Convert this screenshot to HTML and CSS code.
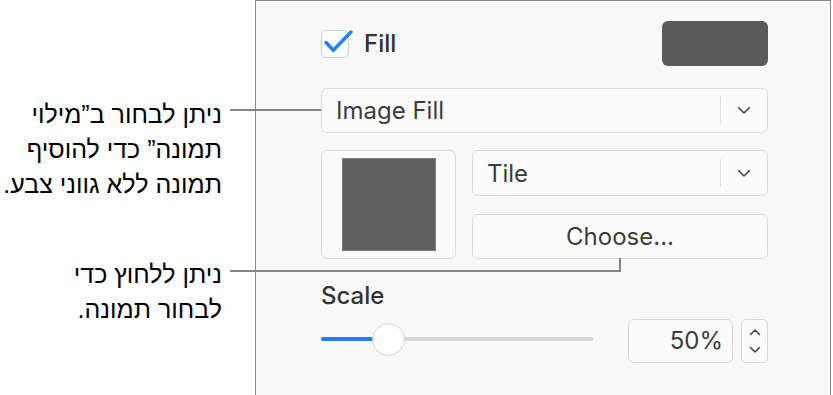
FILE: index.html
```html
<!DOCTYPE html>
<html lang="he">
<head>
  <meta charset="UTF-8">
  <title>Image Fill</title>
  <link rel="stylesheet" href="styles.css">
</head>
<body>
  <div class="page">
    <div class="notes">
      <p class="note">ניתן לבחור ב”מילוי<br>תמונה” כדי להוסיף<br>תמונה ללא גווני צבע.<span class="leader leader-fill"></span></p>
      <p class="note note-choose">ניתן ללחוץ כדי<br>לבחור תמונה.<span class="leader leader-choose"></span></p>
    </div>

    <div class="panel" dir="ltr" lang="en">
      <div class="fill-row">
        <span class="check">
          <svg width="36" height="28" viewBox="0 0 36 28"><path d="M5 13.5 L12.3 21.3 L30 3" /></svg>
        </span>
        <span class="fill-label">Fill</span>
        <span class="swatch"></span>
      </div>

      <div class="popup popup-fill">
        <span class="popup-label">Image Fill</span>
        <span class="popup-arrow"><svg width="14" height="9" viewBox="0 0 14 9"><path d="M1.5 1.5 L7 7 L12.5 1.5" /></svg></span>
      </div>

      <div class="image-row">
        <div class="image-well"><span class="image-thumb"></span></div>
        <div class="image-controls">
          <div class="popup popup-tile">
            <span class="popup-label">Tile</span>
            <span class="popup-arrow"><svg width="14" height="9" viewBox="0 0 14 9"><path d="M1.5 1.5 L7 7 L12.5 1.5" /></svg></span>
          </div>
          <div class="button">Choose...</div>
        </div>
      </div>

      <div class="scale-label">Scale</div>
      <div class="scale-row">
        <div class="slider">
          <span class="slider-fill"></span>
          <span class="slider-knob"></span>
        </div>
        <div class="field">50%</div>
        <div class="stepper">
          <svg width="12" height="8" viewBox="0 0 12 8"><path d="M1.5 6.5 L6 2 L10.5 6.5" /></svg>
          <svg width="12" height="8" viewBox="0 0 12 8"><path d="M1.5 1.5 L6 6 L10.5 1.5" /></svg>
        </div>
      </div>
    </div>
  </div>
</body>
</html>
```

FILE: styles.css
```css
* {
  box-sizing: border-box;
}
body {
  margin: 0;
  background: #fff;
  font-family: Inter, "Liberation Sans", sans-serif;
  overflow: hidden;
}
.page {
  display: flex;
  height: 395px;
}

/* callouts on the left */
.notes {
  width: 255px;
  flex: none;
  padding: 97px 33px 0 0;
  direction: rtl;
}
.note {
  position: relative;
  margin: 0;
  font-family: "Liberation Sans", "DejaVu Sans", sans-serif;
  font-size: 25px;
  line-height: 35px;
  color: #000;
}
.note-choose {
  margin-top: 55px;
}
.leader {
  position: absolute;
  left: calc(100% + 8px);
  z-index: 2;
}
.leader-fill {
  top: 12px;
  width: 91px;
  height: 2px;
  background: #858585;
}
.leader-choose {
  top: 1px;
  width: 391px;
  height: 14px;
  border-bottom: 2px solid #858585;
  border-right: 2px solid #858585;
}

/* inspector panel */
.panel {
  flex: none;
  width: 576px;
  background: #f8f8f8;
  border: 1px solid #8a8a8a;
  border-bottom: none;
  padding: 20px 62px 0 65px;
  display: flex;
  flex-direction: column;
  color: #3d3d3d;
  font-size: 24px;
}
.fill-row {
  display: flex;
  align-items: center;
  height: 45px;
}
.check {
  position: relative;
  width: 28px;
  height: 28px;
  background: #fff;
  border: 1.5px solid #d0d0d0;
  border-radius: 5px;
}
.check svg {
  position: absolute;
  left: -1.5px;
  top: -1.5px;
  overflow: visible;
}
.check path {
  fill: none;
  stroke: #1c84fb;
  stroke-width: 3.5;
  stroke-linecap: round;
  stroke-linejoin: round;
}
.fill-label {
  margin-left: 15px;
  font-weight: 500;
  color: #333;
}
.swatch {
  margin-left: auto;
  width: 106px;
  height: 45px;
  border-radius: 6px;
  background: #5a5a5a;
}

.popup {
  display: flex;
  align-items: center;
  height: 45px;
  padding-left: 14px;
  background: #fcfcfc;
  border: 1.5px solid #d9d9d9;
  border-radius: 6px;
}
.popup-fill {
  margin-top: 22px;
}
.popup-tile {
  height: 46px;
}
.popup-label {
  flex: 1;
}
.popup-arrow {
  width: 47px;
  align-self: stretch;
  margin: 8px 0;
  border-left: 1.5px solid #e0e0e0;
  display: flex;
  align-items: center;
  justify-content: center;
}
.popup-arrow path,
.stepper path {
  fill: none;
  stroke: #484848;
  stroke-width: 1.6;
  stroke-linecap: round;
  stroke-linejoin: round;
}

.image-row {
  display: flex;
  gap: 16px;
  margin-top: 17px;
}
.image-well {
  width: 135px;
  height: 109px;
  display: flex;
  align-items: center;
  justify-content: center;
  background: #fafafa;
  border: 1.5px solid #d9d9d9;
  border-radius: 6px;
}
.image-thumb {
  width: 94px;
  height: 93px;
  background: #606060;
  border: 1px solid #7c7c7c;
}
.image-controls {
  flex: 1;
  display: flex;
  flex-direction: column;
  gap: 18px;
}
.button {
  height: 45px;
  display: flex;
  align-items: center;
  justify-content: center;
  background: #fcfcfc;
  border: 1.5px solid #d9d9d9;
  border-radius: 6px;
}

.scale-label {
  margin-top: 25px;
  line-height: 24px;
  font-weight: 500;
  color: #333;
}
.scale-row {
  display: flex;
  height: 44px;
  margin-top: 11px;
}
.slider {
  position: relative;
  width: 272px;
  height: 4px;
  margin-top: 18px;
  background: #d6d6d6;
  border-radius: 2px;
}
.slider-fill {
  display: block;
  width: 52px;
  height: 100%;
  background: #1a7ff9;
  border-radius: 2px 0 0 2px;
}
.slider-knob {
  position: absolute;
  left: 51px;
  top: 50%;
  width: 33px;
  height: 33px;
  margin-top: -16.5px;
  background: #fff;
  border: 1.5px solid #d2d2d2;
  border-radius: 50%;
}
.field {
  width: 105px;
  margin-left: 35px;
  padding-right: 9px;
  line-height: 41px;
  text-align: right;
  background: #fcfcfc;
  border: 1.5px solid #d6d6d6;
  border-radius: 6px;
}
.stepper {
  width: 27px;
  margin-left: 8px;
  display: flex;
  flex-direction: column;
  align-items: center;
  justify-content: space-between;
  padding: 8px 0;
  background: #fcfcfc;
  border: 1.5px solid #d6d6d6;
  border-radius: 5px;
}
```
